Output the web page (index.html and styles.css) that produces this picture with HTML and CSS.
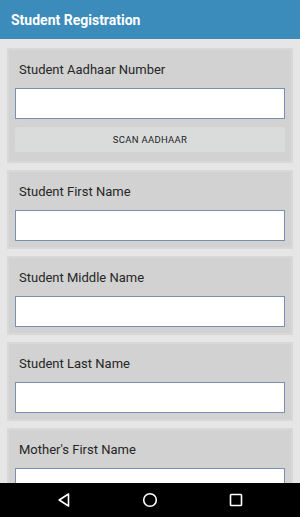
FILE: index.html
```html
<!DOCTYPE html>
<html lang="en">
<head>
    <meta charset="UTF-8">
    <meta name="viewport" content="width=device-width, initial-scale=1.0">
    <title>Student Registration</title>
    <link rel="stylesheet" href="styles.css">
</head>
<body>
    <div class="app">
        <div class="toolbar">Student Registration</div>

        <div class="form">
            <div class="card">
                <label class="label">Student Aadhaar Number</label>
                <input class="field" type="text">
                <button class="scan-btn">SCAN AADHAAR</button>
            </div>
            <div class="card">
                <label class="label">Student First Name</label>
                <input class="field" type="text">
            </div>
            <div class="card">
                <label class="label">Student Middle Name</label>
                <input class="field" type="text">
            </div>
            <div class="card">
                <label class="label">Student Last Name</label>
                <input class="field" type="text">
            </div>
            <div class="card">
                <label class="label">Mother's First Name</label>
                <input class="field" type="text">
            </div>
        </div>

        <div class="navbar">
            <span class="nav-btn"><svg width="12" height="14" viewBox="0 0 12 14"><path d="M10.5 1 L1.2 7 L10.5 13 Z" fill="none" stroke="#fff" stroke-width="1.6" stroke-linejoin="round"/></svg></span>
            <span class="nav-btn"><svg width="16" height="16" viewBox="0 0 16 16"><circle cx="8" cy="8" r="6.3" fill="none" stroke="#fff" stroke-width="1.6"/></svg></span>
            <span class="nav-btn"><svg width="14" height="14" viewBox="0 0 14 14"><rect x="1.5" y="1.5" width="11" height="11" rx="0.8" fill="none" stroke="#fff" stroke-width="1.6"/></svg></span>
        </div>
    </div>
</body>
</html>
```

FILE: styles.css
```css
html, body {
    margin: 0;
    padding: 0;
}

body {
    font-family: Roboto, "Noto Sans", Arial, sans-serif;
    background-color: #e6e6e6;
}

.app {
    width: 300px;
    height: 517px;
    display: flex;
    flex-direction: column;
    overflow: hidden;
}

.toolbar {
    height: 39px;
    flex-shrink: 0;
    background-color: #3b8bbb;
    color: #fff;
    font-size: 14px;
    font-weight: bold;
    line-height: 40px;
    padding-left: 11px;
    box-sizing: border-box;
}

.form {
    flex: 1;
    overflow: hidden;
    padding: 9px 7px 0 7px;
    display: flex;
    flex-direction: column;
    gap: 7px;
}

.card {
    flex-shrink: 0;
    background-color: #d2d2d2;
    border: 2px solid #d8d8d8;
    padding: 0 6px 6px 6px;
    display: flex;
    flex-direction: column;
}

.label {
    font-size: 13px;
    color: #262626;
    height: 38px;
    line-height: 40px;
    padding-left: 4px;
}

.field {
    height: 31px;
    box-sizing: border-box;
    margin: 0;
    border: 1px solid #7a90ad;
    background-color: #fff;
    outline: none;
}

.scan-btn {
    margin-top: 8px;
    height: 25px;
    border: none;
    border-radius: 2px;
    background-color: #dadcdc;
    color: #222;
    font-family: Roboto, "Noto Sans", Arial, sans-serif;
    font-size: 9.5px;
    letter-spacing: 0.3px;
    margin-bottom: 3px;
}

.navbar {
    height: 34px;
    flex-shrink: 0;
    background-color: #000;
    display: flex;
    align-items: center;
    justify-content: center;
    gap: 66px;
}

.nav-btn {
    width: 20px;
    display: flex;
    justify-content: center;
}
```
